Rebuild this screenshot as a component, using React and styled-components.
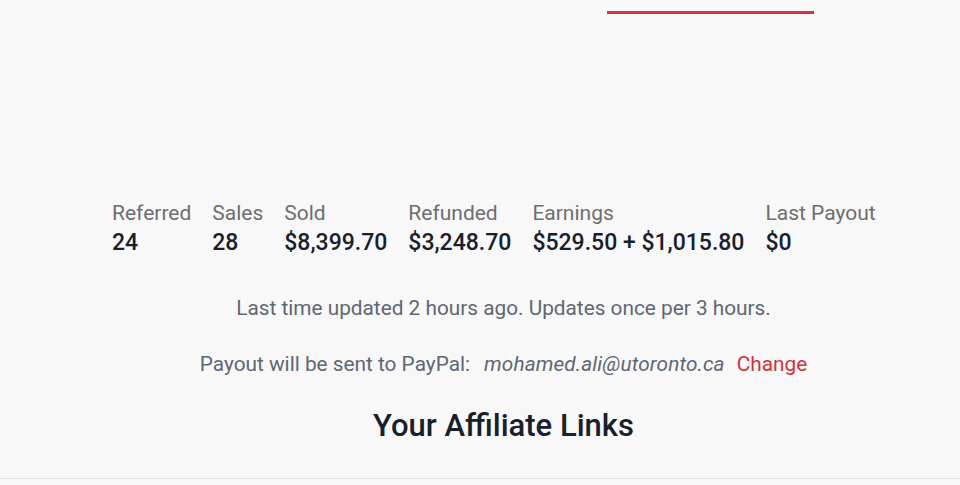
import React from "react";
import styled, { createGlobalStyle } from "styled-components";

const Global = createGlobalStyle`
  html, body { margin: 0; padding: 0; background: #f8f8f8; }
  body { font-family: Roboto, "Noto Sans", "Liberation Sans", sans-serif; }
`;

const Page = styled.div`
  width: 960px;
  height: 485px;
  background: #f8f8f8;
  display: flex;
  flex-direction: column;
  overflow: hidden;
`;

const TabBar = styled.nav`
  display: flex;
  padding-left: 607px;
  height: 14px;
`;

const Tab = styled.div`
  width: 207px;
  height: 11px;
  border-bottom: 3px solid ${(p) => (p.$active ? "#d2343f" : "transparent")};
`;

const Content = styled.section`
  flex: 1;
  display: flex;
  flex-direction: column;
  padding: 186px 0 0 112px;
  width: 783px;
  box-sizing: content-box;
`;

const Stats = styled.div`
  display: flex;
  gap: 21px;
`;

const Stat = styled.div`
  display: flex;
  flex-direction: column;
`;

const Label = styled.span`
  font-size: 21px;
  line-height: 26px;
  color: #6e6e6e;
`;

const Value = styled.span`
  margin-top: 2px;
  font-size: 23px;
  line-height: 30px;
  font-weight: 500;
  color: #18202c;
`;

const Note = styled.p`
  margin: ${(p) => p.$mt}px 0 0;
  text-align: center;
  font-size: 20.8px;
  line-height: 26px;
  color: #5e6774;
`;

const Email = styled.em`
  margin-left: 14px;
  font-style: italic;
  letter-spacing: 0.1px;
`;

const ChangeLink = styled.a`
  margin-left: 12px;
  color: #d6303b;
  text-decoration: none;
`;

const Title = styled.h2`
  margin: 31px 0 0;
  text-align: center;
  font-size: 31px;
  line-height: 36px;
  font-weight: 500;
  color: #18202c;
`;

const Footer = styled.div`
  height: 6px;
  border-top: 1px solid #e2e2e2;
  background: #f8f8f8;
`;

const stats = [
  ["Referred", "24"],
  ["Sales", "28"],
  ["Sold", "$8,399.70"],
  ["Refunded", "$3,248.70"],
  ["Earnings", "$529.50 + $1,015.80"],
  ["Last Payout", "$0"],
];

export default function App() {
  return (
    <Page>
      <Global />
      <TabBar>
        <Tab $active />
      </TabBar>
      <Content>
        <Stats>
          {stats.map(([l, v]) => (
            <Stat key={l}>
              <Label>{l}</Label>
              <Value>{v}</Value>
            </Stat>
          ))}
        </Stats>
        <Note $mt={37}>Last time updated 2 hours ago. Updates once per 3 hours.</Note>
        <Note $mt={30}>
          Payout will be sent to PayPal:
          <Email>mohamed.ali@utoronto.ca</Email>
          <ChangeLink href="#">Change</ChangeLink>
        </Note>
        <Title>Your Affiliate Links</Title>
      </Content>
      <Footer />
    </Page>
  );
}
